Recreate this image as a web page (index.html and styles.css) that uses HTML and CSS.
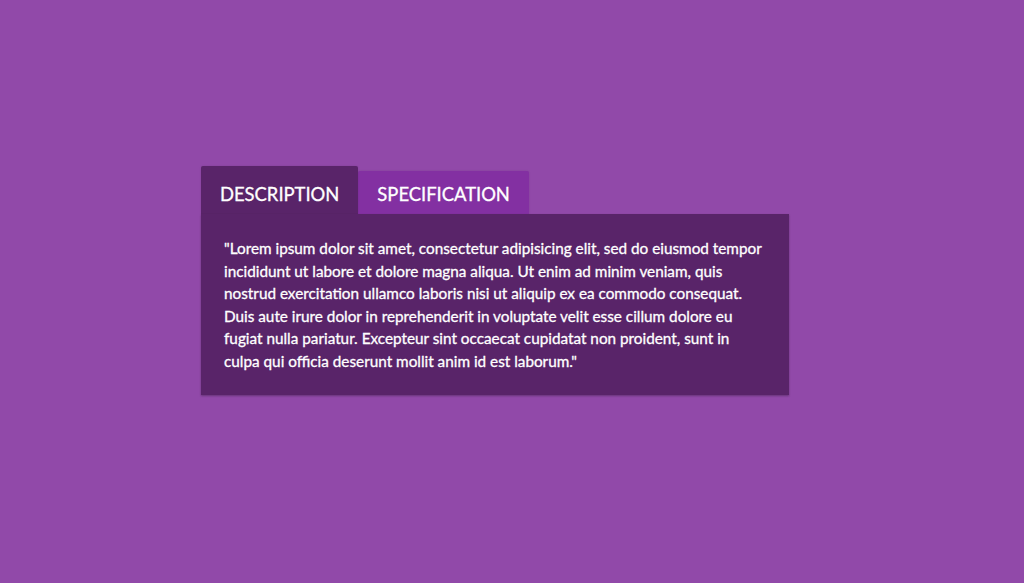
FILE: index.html
```html
<!DOCTYPE html>
<html lang="en">
<head>
<meta charset="utf-8">
<title>Tabs</title>
<link rel="stylesheet" href="styles.css">
</head>
<body>
<div class="stage">
  <div class="tabs">
    <div class="tab-bar">
      <div class="tab tab-active">DESCRIPTION</div>
      <div class="tab">SPECIFICATION</div>
    </div>
    <div class="panel">
      <p class="panel-text">"Lorem ipsum dolor sit amet, consectetur adipisicing elit, sed do eiusmod tempor incididunt ut labore et dolore magna aliqua. Ut enim ad minim veniam, quis nostrud exercitation ullamco laboris nisi ut aliquip ex ea commodo consequat. Duis aute irure dolor in reprehenderit in voluptate velit esse cillum dolore eu fugiat nulla pariatur. Excepteur sint occaecat cupidatat non proident, sunt in culpa qui officia deserunt mollit anim id est laborum."</p>
    </div>
  </div>
</div>
</body>
</html>
```

FILE: styles.css
```css
html, body {
  margin: 0;
  padding: 0;
}

body {
  background: #9149a9;
  font-family: Lato, "Open Sans", sans-serif;
  color: #fff;
  height: 583px;
  overflow: hidden;
}

.stage {
  padding: 166px 0 0 201px;
}

.tabs {
  width: 588px;
}

.tab-bar {
  display: flex;
  align-items: flex-end;
}

.tab {
  font-size: 18.4px;
  line-height: 20px;
  padding: 13px 19px 10px;
  background: #8330a2;
  color: #fff;
  -webkit-text-stroke: 0.3px #fff;
  box-shadow: 0 0 2px rgba(0, 0, 0, 0.12);
  border-radius: 2px 2px 0 0;
}

.tab-active {
  background: #592469;
  padding-top: 18px;
  position: relative;
  z-index: 1;
}

.panel {
  background: #592469;
  padding: 23px 23px 22px;
  box-shadow: 0 1px 2px rgba(0, 0, 0, 0.3);
  position: relative;
  z-index: 1;
}

.panel-text {
  margin: 0;
  font-size: 15.3px;
  line-height: 22.6px;
  font-weight: 400;
  -webkit-text-stroke: 0.3px #fff;
}
```
